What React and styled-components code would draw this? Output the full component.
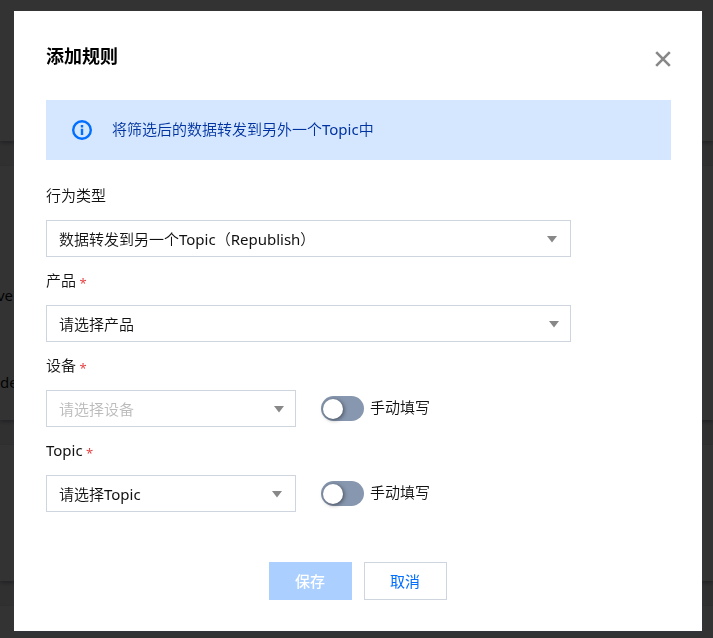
import React, { useState } from "react";
import styled, { createGlobalStyle } from "styled-components";

const GlobalStyle = createGlobalStyle`
  * {
    box-sizing: border-box;
  }
  body {
    margin: 0;
    background: #f0f0f4;
    overflow: hidden;
  }
  body,
  button,
  select,
  input {
    color: #111;
    font-family: "Noto Sans", "Noto Sans CJK SC DemiLight", "Noto Sans CJK SC",
      sans-serif;
    font-size: 15px;
    font-weight: 400;
  }
`;

const StyledPage = styled.div`
  display: flex;
  flex-direction: column;
  gap: 25px;
  height: 100vh;
  overflow: hidden;
`;

const StyledCard = styled.section`
  flex: none;
  height: ${(props) => props.$height}px;
  padding-top: ${(props) => props.$top || 0}px;
  background: #fff;
  box-shadow: 0 2px 4px rgba(54, 58, 80, 0.4);
`;

const StyledCell = styled.p`
  display: flex;
  justify-content: ${(props) => (props.$end ? "flex-end" : "flex-start")};
  width: ${(props) => (props.$end ? "13px" : "auto")};
  margin: 0 0 63px;
  line-height: 24px;
`;

const StyledOverlay = styled.div`
  position: fixed;
  inset: 0;
  padding: 11px 11px 7px 14px;
  background: rgba(0, 0, 0, 0.8);
`;

const StyledDialog = styled.div`
  padding: 31px 31px 31px 32px;
  background: #fff;
  box-shadow: 0 2px 4px rgba(54, 58, 80, 0.3);
`;

const StyledHeader = styled.header`
  display: flex;
  align-items: flex-start;
  justify-content: space-between;
  padding-bottom: 24px;
  h2 {
    margin: 0;
    color: #000;
    font-family: "Noto Sans", "Noto Sans CJK SC", sans-serif;
    font-size: 18px;
    font-weight: 700;
    line-height: 28px;
  }
`;

const StyledClose = styled.button`
  display: flex;
  align-items: center;
  height: 34px;
  padding: 0;
  border: 0;
  background: none;
  cursor: pointer;
`;

const StyledAlert = styled.div`
  display: flex;
  align-items: center;
  gap: 20px;
  height: 60px;
  margin-bottom: 24px;
  padding: 0 26px;
  background: #d5e7ff;
  color: #0033a0;
  p {
    margin: 0;
    padding-bottom: 3px;
  }
`;

const StyledField = styled.div`
  display: flex;
  flex-direction: column;
  gap: 14px;
  margin-bottom: 12px;
`;

const StyledLabel = styled.label`
  height: 22px;
  line-height: 22px;
  span {
    color: #e54545;
    font-size: 13px;
    line-height: 1;
    vertical-align: -2px;
  }
`;

const StyledRow = styled.div`
  display: flex;
  align-items: center;
  gap: 25px;
`;

const StyledSelect = styled.div`
  position: relative;
  width: ${(props) => (props.$half ? "40%" : "84%")};
  svg {
    position: absolute;
    top: 16px;
    right: ${(props) => (props.$inset ? 14 : 12)}px;
    pointer-events: none;
  }
  select {
    display: block;
    width: 100%;
    height: 37px;
    padding: 0 32px 0 12px;
    border: 1px solid #cfd5de;
    border-radius: 0;
    background: #fff;
    appearance: none;
    &:disabled {
      color: #bbb;
      opacity: 1;
    }
  }
`;

const StyledSwitch = styled.label`
  display: flex;
  align-items: center;
  gap: 6px;
  cursor: pointer;
  input {
    flex: none;
    width: 43px;
    height: 25px;
    margin: 0;
    padding: 3px 2px;
    border-radius: 13px;
    background: #8797af;
    appearance: none;
    cursor: pointer;
  }
  input::before {
    content: "";
    display: block;
    width: 20px;
    height: 20px;
    border-radius: 50%;
    background: #fff;
    box-shadow: 1px 1px 4px rgba(0, 0, 0, 0.5);
  }
  input:checked {
    padding-left: 21px;
    background: #006eff;
  }
  span {
    padding-bottom: 4px;
  }
`;

const StyledFooter = styled.footer`
  display: flex;
  justify-content: center;
  gap: 12px;
  padding: 38px 2px 0 0;
`;

const StyledButton = styled.button`
  width: 83px;
  height: 38px;
  padding: 0 0 2px;
  border: 1px solid ${(props) => (props.$primary ? "#abcfff" : "#cfd5de")};
  background: ${(props) => (props.$primary ? "#abcfff" : "#fff")};
  color: ${(props) => (props.$primary ? "#fff" : "#006eff")};
  font-family: "Noto Sans", "Noto Sans CJK SC", sans-serif;
  font-weight: ${(props) => (props.$primary ? 500 : 400)};
`;

const Select = ({ id, text, half, inset, disabled }) => (
  <StyledSelect $half={half} $inset={inset}>
    <select id={id} disabled={disabled}>
      <option>{text}</option>
    </select>
    <svg width="10" height="7" viewBox="0 0 10 7" aria-hidden="true">
      <path d="M0 0h10L5 6.5z" fill="#888" />
    </svg>
  </StyledSelect>
);

const Field = ({ id, label, required, children }) => (
  <StyledField>
    <StyledLabel htmlFor={id}>
      {label}
      {required && <span> *</span>}
    </StyledLabel>
    {children}
  </StyledField>
);

const Switch = () => {
  const [checked, setChecked] = useState(false);
  return (
    <StyledSwitch>
      <input
        type="checkbox"
        role="switch"
        checked={checked}
        onChange={(e) => setChecked(e.target.checked)}
      />
      <span>手动填写</span>
    </StyledSwitch>
  );
};

const App = () => {
  return (
    <>
      <GlobalStyle />
      <StyledPage aria-hidden="true">
        <StyledCard $height={141} />
        <StyledCard $height={254} $top={117}>
          <StyledCell $end>ve</StyledCell>
          <StyledCell>de</StyledCell>
        </StyledCard>
        <StyledCard $height={136} />
        <StyledCard $height={136} />
      </StyledPage>
      <StyledOverlay>
        <StyledDialog role="dialog" aria-labelledby="dialog-title">
          <StyledHeader>
            <h2 id="dialog-title">添加规则</h2>
            <StyledClose type="button" aria-label="关闭">
              <svg width="16" height="16" viewBox="0 0 16 16">
                <path
                  d="M1.2 1.2l13.6 13.6M14.8 1.2L1.2 14.8"
                  stroke="#888"
                  strokeWidth="2.6"
                />
              </svg>
            </StyledClose>
          </StyledHeader>
          <StyledAlert>
            <svg width="20" height="20" viewBox="0 0 20 20" aria-hidden="true">
              <circle
                cx="10"
                cy="10"
                r="8.8"
                fill="none"
                stroke="#006eff"
                strokeWidth="2.4"
              />
              <path d="M8.8 5h2.4v2.4H8.8zM8.8 8.8h2.4V15H8.8z" fill="#006eff" />
            </svg>
            <p>将筛选后的数据转发到另外一个Topic中</p>
          </StyledAlert>
          <Field id="action" label="行为类型">
            <Select id="action" text="数据转发到另一个Topic（Republish）" inset />
          </Field>
          <Field id="product" label="产品" required>
            <Select id="product" text="请选择产品" />
          </Field>
          <Field id="device" label="设备" required>
            <StyledRow>
              <Select id="device" text="请选择设备" half disabled />
              <Switch />
            </StyledRow>
          </Field>
          <Field id="topic" label="Topic" required>
            <StyledRow>
              <Select id="topic" text="请选择Topic" half inset />
              <Switch />
            </StyledRow>
          </Field>
          <StyledFooter>
            <StyledButton type="button" $primary disabled>
              保存
            </StyledButton>
            <StyledButton type="button">取消</StyledButton>
          </StyledFooter>
        </StyledDialog>
      </StyledOverlay>
    </>
  );
};

export default App;
